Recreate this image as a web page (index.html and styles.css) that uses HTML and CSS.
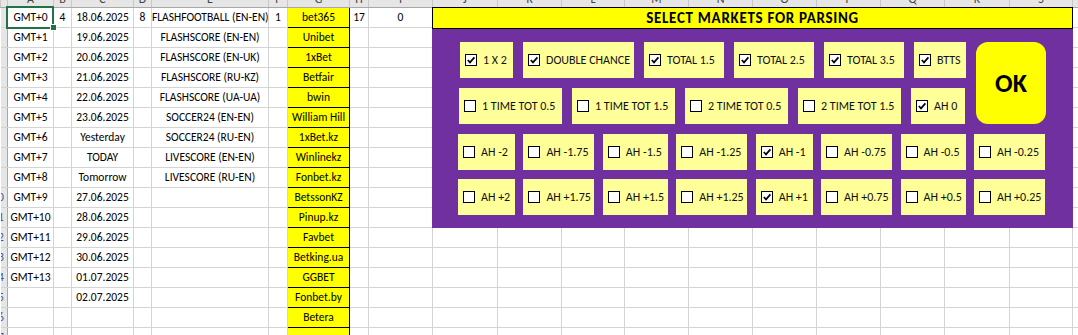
FILE: index.html
```html
<!DOCTYPE html>
<html lang="en">
<head>
    <meta charset="UTF-8">
    <title>Parser settings</title>
    <link rel="stylesheet" href="styles.css">
</head>
<body>
    <div class="sheet">
        <table class="grid">
            <colgroup>
                <col class="w-rh"><col class="w-a"><col class="w-b"><col class="w-c"><col class="w-b"><col class="w-e">
                <col class="w-f"><col class="w-c"><col class="w-f"><col class="w-i"><col class="w-65"><col class="w-i">
                <col class="w-63"><col class="w-i"><col class="w-i"><col class="w-i"><col class="w-i"><col class="w-i">
                <col class="w-65"><col class="w-63"><col class="w-i">
            </colgroup>
            <thead>
                <tr class="colhdr">
                    <th class="corner"></th><th><span>A</span></th><th><span>B</span></th><th><span>C</span></th>
                    <th><span>D</span></th><th><span>E</span></th><th><span>F</span></th><th><span>G</span></th>
                    <th><span>H</span></th><th><span>I</span></th><th><span>J</span></th><th><span>K</span></th>
                    <th><span>L</span></th><th><span>M</span></th><th><span>N</span></th><th><span>O</span></th>
                    <th><span>P</span></th><th><span>Q</span></th><th><span>R</span></th><th><span>S</span></th>
                    <th><span>T</span></th>
                </tr>
            </thead>
            <tbody id="rows"></tbody>
        </table>

        <div class="markets">
            <div class="markets-title">SELECT MARKETS FOR PARSING</div>
            <div class="markets-body">
                <div class="top">
                    <div class="top-rows">
                        <div class="mrow mrow-1">
                            <label class="opt"><span class="box on"></span>1 X 2</label>
                            <label class="opt"><span class="box on"></span>DOUBLE CHANCE</label>
                            <label class="opt"><span class="box on"></span>TOTAL 1.5</label>
                            <label class="opt"><span class="box on"></span>TOTAL 2.5</label>
                            <label class="opt"><span class="box on"></span>TOTAL 3.5</label>
                            <label class="opt"><span class="box on"></span>BTTS</label>
                        </div>
                        <div class="mrow mrow-2">
                            <label class="opt"><span class="box"></span>1 TIME TOT 0.5</label>
                            <label class="opt"><span class="box"></span>1 TIME TOT 1.5</label>
                            <label class="opt"><span class="box"></span>2 TIME TOT 0.5</label>
                            <label class="opt"><span class="box"></span>2 TIME TOT 1.5</label>
                            <label class="opt"><span class="box on"></span>AH 0</label>
                        </div>
                    </div>
                    <button class="ok">OK</button>
                </div>
                <div class="mrow mrow-ah">
                    <label class="opt"><span class="box"></span>AH -2</label>
                    <label class="opt"><span class="box"></span>AH -1.75</label>
                    <label class="opt"><span class="box"></span>AH -1.5</label>
                    <label class="opt"><span class="box"></span>AH -1.25</label>
                    <label class="opt"><span class="box on"></span>AH -1</label>
                    <label class="opt"><span class="box"></span>AH -0.75</label>
                    <label class="opt"><span class="box"></span>AH -0.5</label>
                    <label class="opt"><span class="box"></span>AH -0.25</label>
                </div>
                <div class="mrow mrow-ah mrow-last">
                    <label class="opt"><span class="box"></span>AH +2</label>
                    <label class="opt"><span class="box"></span>AH +1.75</label>
                    <label class="opt"><span class="box"></span>AH +1.5</label>
                    <label class="opt"><span class="box"></span>AH +1.25</label>
                    <label class="opt"><span class="box on"></span>AH +1</label>
                    <label class="opt"><span class="box"></span>AH +0.75</label>
                    <label class="opt"><span class="box"></span>AH +0.5</label>
                    <label class="opt"><span class="box"></span>AH +0.25</label>
                </div>
            </div>
        </div>
    </div>

    <script>
        const data = [
            ['GMT+0', '4', '18.06.2025', '8', 'FLASHFOOTBALL (EN-EN)', '1', 'bet365', '17', '0'],
            ['GMT+1', '', '19.06.2025', '', 'FLASHSCORE (EN-EN)', '', 'Unibet'],
            ['GMT+2', '', '20.06.2025', '', 'FLASHSCORE (EN-UK)', '', '1xBet'],
            ['GMT+3', '', '21.06.2025', '', 'FLASHSCORE (RU-KZ)', '', 'Betfair'],
            ['GMT+4', '', '22.06.2025', '', 'FLASHSCORE (UA-UA)', '', 'bwin'],
            ['GMT+5', '', '23.06.2025', '', 'SOCCER24 (EN-EN)', '', 'William Hill'],
            ['GMT+6', '', 'Yesterday', '', 'SOCCER24 (RU-EN)', '', '1xBet.kz'],
            ['GMT+7', '', 'TODAY', '', 'LIVESCORE (EN-EN)', '', 'Winlinekz'],
            ['GMT+8', '', 'Tomorrow', '', 'LIVESCORE (RU-EN)', '', 'Fonbet.kz'],
            ['GMT+9', '', '27.06.2025', '', '', '', 'BetssonKZ'],
            ['GMT+10', '', '28.06.2025', '', '', '', 'Pinup.kz'],
            ['GMT+11', '', '29.06.2025', '', '', '', 'Favbet'],
            ['GMT+12', '', '30.06.2025', '', '', '', 'Betking.ua'],
            ['GMT+13', '', '01.07.2025', '', '', '', 'GGBET'],
            ['', '', '02.07.2025', '', '', '', 'Fonbet.by'],
            ['', '', '', '', '', '', 'Betera'],
            ['', '', '', '', '', '', '']
        ];

        const tbody = document.getElementById('rows');
        data.forEach((row, i) => {
            let html = `<td class="rn"><span class="rn-in">${i + 1}</span></td>`;
            for (let c = 0; c < 20; c++) {
                const val = row[c] || '';
                let cls = '';
                if (c === 6) cls = 'bk';
                if (i === 0 && c === 0) cls = 'sel';
                html += `<td class="${cls}">${val}</td>`;
            }
            tbody.insertAdjacentHTML('beforeend', `<tr>${html}</tr>`);
        });

        // tick marks for checked boxes
        document.querySelectorAll('.box.on').forEach(box => {
            box.innerHTML = '<svg viewBox="0 0 10 10" width="10" height="10"><polyline points="1.8,5 4,7.4 8.4,2.4" fill="none" stroke="#000" stroke-width="1.7"/></svg>';
        });
    </script>
</body>
</html>
```

FILE: styles.css
```css
body {
    margin: 0;
    font-family: Carlito, "Liberation Sans", sans-serif;
    background: #fff;
    overflow: hidden;
}
.sheet {
    position: relative;
    width: 1078px;
    height: 335px;
    overflow: hidden;
}
.grid {
    border-collapse: collapse;
    table-layout: fixed;
    width: 1136px;
    font-size: 11.5px;
    color: #000;
}
.w-rh { width: 7px; }
.w-a { width: 46px; }
.w-b { width: 18px; }
.w-c { width: 62px; }
.w-e { width: 117px; }
.w-f { width: 19px; }
.w-i { width: 64px; }
.w-65 { width: 65px; }
.w-63 { width: 63px; }

.colhdr th {
    height: 7px;
    padding: 0;
    background: #e6e6e6;
    border: 1px solid #c8c8c8;
    border-top: none;
    border-bottom-color: #a8a8a8;
    font-weight: normal;
    font-size: 12px;
    color: #444;
    vertical-align: top;
    overflow: hidden;
}
.colhdr th span {
    display: block;
    height: 12px;
    line-height: 12px;
    margin-top: -7px;
    margin-bottom: -5px;
}
.grid td {
    height: 19px;
    padding: 0;
    border: 1px solid #d4d4d4;
    text-align: center;
    white-space: nowrap;
    overflow: hidden;
    line-height: 19px;
}
.grid td.rn {
    background: #e6e6e6;
    border-right-color: #a8a8a8;
    border-left: none;
    color: #2f5c9a;
}
.rn-in {
    display: block;
    width: 21px;
    margin-left: -13px;
    text-align: center;
}
.grid td.bk {
    background: #ffff00;
    border: 1px solid #000;
}
.grid td.sel {
    position: relative;
    overflow: visible;
}
.sel::before {
    content: "";
    position: absolute;
    left: -2px;
    top: -2px;
    right: -1px;
    bottom: -2px;
    border: 2px solid #217346;
}
.sel::after {
    content: "";
    position: absolute;
    right: -4px;
    bottom: -4px;
    width: 5px;
    height: 5px;
    background: #217346;
    border: 1px solid #fff;
}

/* floating markets panel */
.markets {
    position: absolute;
    left: 432px;
    top: 7px;
    width: 641px;
}
.markets-title {
    height: 22px;
    box-sizing: border-box;
    background: #ffff00;
    border: 1px solid #000;
    font-weight: bold;
    font-size: 15px;
    letter-spacing: 0.7px;
    line-height: 20px;
    text-align: center;
}
.markets-body {
    background: #7030a0;
    height: 199px;
    box-sizing: border-box;
    padding: 13px 0 0 26px;
}
.top {
    display: flex;
    gap: 10px;
    margin-left: 2px;
}
.top-rows {
    display: flex;
    flex-direction: column;
    gap: 10px;
}
.mrow {
    display: grid;
    column-gap: 10px;
}
.mrow-1 {
    grid-template-columns: 53px 111px 80px 80px 80px 52px;
}
.mrow-2 {
    grid-template-columns: 103px 103px 103px 103px 54px;
    margin-left: -1px;
}
.mrow-ah {
    grid-template-columns: 57px 71px 65px 71px 57px 71px 65px 71px;
    justify-content: space-between;
    column-gap: 0;
    width: 587px;
    margin-top: 10px;
}
.mrow-last {
    margin-top: 9px;
}
.opt {
    display: flex;
    align-items: center;
    gap: 6px;
    height: 36px;
    padding-left: 5px;
    background: #ffff99;
    font-size: 12px;
    white-space: nowrap;
    color: #111;
}
.box {
    flex: none;
    width: 12px;
    height: 12px;
    box-sizing: border-box;
    border: 1px solid #000;
    background: #fff;
    display: flex;
    align-items: center;
    justify-content: center;
}
.box svg {
    display: block;
}
.ok {
    width: 70px;
    height: 82px;
    padding: 0;
    border: none;
    border-radius: 12px;
    background: #ffff00;
    font-family: inherit;
    font-weight: bold;
    font-size: 26px;
    color: #000;
}
```
